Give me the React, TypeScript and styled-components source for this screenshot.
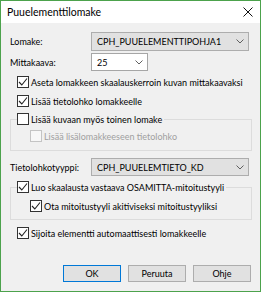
import styled, { createGlobalStyle } from 'styled-components'

const GlobalStyle = createGlobalStyle`
  html, body {
    margin: 0;
    padding: 0;
    background: #ffffff;
  }
  body {
    font-family: Lato, "Noto Sans", sans-serif;
    font-size: 9px;
    color: #000000;
  }
`

const Window = styled.div`
  width: 261px;
  height: 292px;
  box-sizing: border-box;
  border: 1px solid #4ca24c;
  display: flex;
  flex-direction: column;
`

const TitleBar = styled.div`
  height: 22px;
  flex: none;
  background: #ffffff;
  display: flex;
  align-items: center;
  justify-content: space-between;
  padding: 0 7px 0 6px;
`

const Title = styled.span`
  font-size: 10.5px;
`

const Body = styled.div`
  flex: 1;
  background: #f0f0f0;
  display: flex;
  flex-direction: column;
  padding: 9px 8px 9px 9px;
`

const FieldRow = styled.div<{ $gap: number }>`
  margin-top: ${p => p.$gap}px;
  display: flex;
  align-items: center;
`

const Label = styled.span`
  width: 81px;
  flex: none;
`

const Select = styled.div<{ $width: number; $edit?: boolean; $height: number }>`
  width: ${p => p.$width}px;
  height: ${p => p.$height}px;
  box-sizing: border-box;
  border: 1px solid ${p => (p.$edit ? '#a6a6a6' : '#adadad')};
  background: ${p => (p.$edit ? '#ffffff' : '#e1e1e1')};
  display: flex;
  align-items: center;
  justify-content: space-between;
  padding: 0 4px 0 5px;
`

const CheckRow = styled.label<{ $gap: number; $indent: number; $disabled?: boolean }>`
  margin-top: ${p => p.$gap}px;
  margin-left: ${p => p.$indent}px;
  height: 14px;
  display: flex;
  align-items: center;
  color: ${p => (p.$disabled ? '#a0a0a0' : '#000000')};
  white-space: nowrap;
`

const Box = styled.span<{ $disabled?: boolean }>`
  width: 12px;
  height: 12px;
  box-sizing: border-box;
  flex: none;
  margin-right: 2px;
  border: 1px solid ${p => (p.$disabled ? '#c4c4c4' : '#333333')};
  background: ${p => (p.$disabled ? '#f7f7f7' : '#ffffff')};
  display: flex;
  align-items: center;
  justify-content: center;
`

const Group = styled.fieldset<{ $gap: number; $bottom: number }>`
  margin: ${p => p.$gap}px 0 0 0;
  padding: 0 0 ${p => p.$bottom}px 6px;
  border: 1px solid #dcdcdc;
  min-width: 0;
`

const Legend = styled.legend`
  padding: 0 2px 0 0;
  height: 14px;
`

const ButtonBar = styled.div`
  margin-top: auto;
  margin-right: 1px;
  display: flex;
  justify-content: flex-end;
  gap: 7px;
`

const Button = styled.div<{ $default?: boolean }>`
  width: 58px;
  height: 17px;
  box-sizing: border-box;
  border: 1px solid ${p => (p.$default ? '#0078d7' : '#adadad')};
  background: #e1e1e1;
  display: flex;
  align-items: center;
  justify-content: center;
`

const Chevron = () => (
  <svg width="8" height="5" viewBox="0 0 8 5">
    <polyline points="0.5,0.5 4,4 7.5,0.5" fill="none" stroke="#606060" strokeWidth="1" />
  </svg>
)

const Tick = () => (
  <svg width="10" height="10" viewBox="0 0 10 10">
    <polyline points="1,5 3.8,8 9,1.5" fill="none" stroke="#222222" strokeWidth="1.1" />
  </svg>
)

const CloseIcon = () => (
  <svg width="10" height="10" viewBox="0 0 10 10">
    <path d="M0.5 0.5 L9.5 9.5 M9.5 0.5 L0.5 9.5" stroke="#111111" strokeWidth="1" />
  </svg>
)

type CheckProps = {
  text: string
  checked?: boolean
  disabled?: boolean
  gap?: number
  indent?: number
}

const Check = ({ text, checked, disabled, gap = 0, indent = 0 }: CheckProps) => (
  <CheckRow $gap={gap} $indent={indent} $disabled={disabled}>
    <Box $disabled={disabled}>{checked && <Tick />}</Box>
    {text}
  </CheckRow>
)

export default function App() {
  return (
    <>
      <GlobalStyle />
      <Window>
        <TitleBar>
          <Title>Puuelementtilomake</Title>
          <CloseIcon />
        </TitleBar>
        <Body>
          <FieldRow $gap={0}>
            <Label>Lomake:</Label>
            <Select $width={158} $height={19}>
              CPH_PUUELEMENTTIPOHJA1
              <Chevron />
            </Select>
          </FieldRow>
          <FieldRow $gap={2}>
            <Label>Mittakaava:</Label>
            <Select $width={57} $height={18} $edit>
              25
              <Chevron />
            </Select>
          </FieldRow>
          <Check gap={4} indent={7} checked text="Aseta lomakkeen skaalauskerroin kuvan mittakaavaksi" />
          <Check gap={5} indent={7} checked text="Lisää tietolohko lomakkeelle" />
          <Group $gap={4} $bottom={7}>
            <Legend>
              <Check text="Lisää kuvaan myös toinen lomake" />
            </Legend>
            <Check gap={3} indent={13} disabled text="Lisää lisälomakkeeseen tietolohko" />
          </Group>
          <FieldRow $gap={7}>
            <Label>Tietolohkotyyppi:</Label>
            <Select $width={158} $height={18}>
              CPH_PUUELEMTIETO_KD
              <Chevron />
            </Select>
          </FieldRow>
          <Group $gap={4} $bottom={6}>
            <Legend>
              <Check checked text="Luo skaalausta vastaava OSAMITTA-mitoitustyyli" />
            </Legend>
            <Check gap={5} indent={13} checked text="Ota mitoitustyyli akitiviseksi mitoitustyyliksi" />
          </Group>
          <Check gap={6} indent={7} checked text="Sijoita elementti automaattisesti lomakkeelle" />
          <ButtonBar>
            <Button $default>OK</Button>
            <Button>Peruuta</Button>
            <Button>Ohje</Button>
          </ButtonBar>
        </Body>
      </Window>
    </>
  )
}
